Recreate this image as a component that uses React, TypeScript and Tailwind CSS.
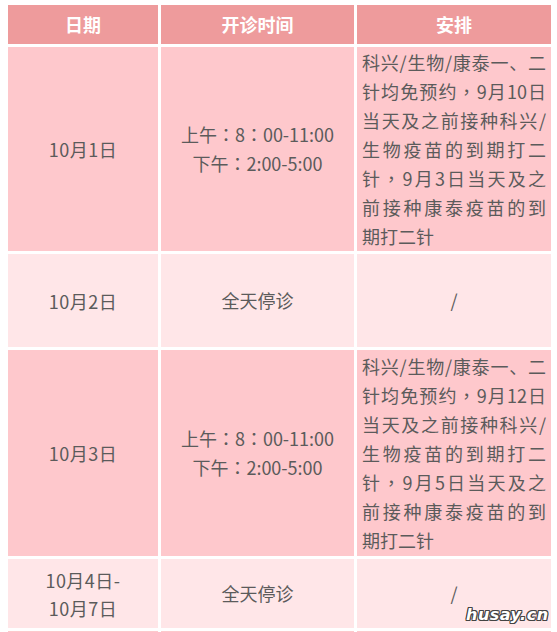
import React from 'react';

const font = "font-['Microsoft_YaHei','Noto_Sans_CJK_SC',sans-serif]";

type Row = {
  date: string[];
  hours: string[];
  plan: string[];
  tone: 'deep' | 'light';
  height: string;
};

const rows: Row[] = [
  {
    date: ['10月1日'],
    hours: ['上午：8：00-11:00', '下午：2:00-5:00'],
    plan: [
      '科兴/生物/康泰一、二',
      '针均免预约，9月10日',
      '当天及之前接种科兴/',
      '生物疫苗的到期打二',
      '针，9月3日当天及之',
      '前接种康泰疫苗的到',
      '期打二针',
    ],
    tone: 'deep',
    height: 'h-[204px]',
  },
  {
    date: ['10月2日'],
    hours: ['全天停诊'],
    plan: ['/'],
    tone: 'light',
    height: 'h-[93px]',
  },
  {
    date: ['10月3日'],
    hours: ['上午：8：00-11:00', '下午：2:00-5:00'],
    plan: [
      '科兴/生物/康泰一、二',
      '针均免预约，9月12日',
      '当天及之前接种科兴/',
      '生物疫苗的到期打二',
      '针，9月5日当天及之',
      '前接种康泰疫苗的到',
      '期打二针',
    ],
    tone: 'deep',
    height: 'h-[206px]',
  },
  {
    date: ['10月4日-', '10月7日'],
    hours: ['全天停诊'],
    plan: ['/'],
    tone: 'light',
    height: 'h-[69px]',
  },
];

// full-width colon and comma sit centred in the reference
const Punct = ({ text }: { text: string }) => (
  <>
    {text.split(/([：，])/).map((part, i) =>
      part === '：' || part === '，' ? (
        <span key={i} className="font-['Noto_Sans_CJK_TC',sans-serif]">
          {part}
        </span>
      ) : (
        <React.Fragment key={i}>{part}</React.Fragment>
      )
    )}
  </>
);

const App = () => {
  return (
    <div className={`w-[557px] h-[632px] overflow-hidden bg-white relative ${font}`}>
      <div className="pl-[8px] pt-[5px] grid grid-cols-[150px_193px_194px] gap-[3px] text-[18px] text-[#5b5b5b]">
        {/* Header */}
        {['日期', '开诊时间', '安排'].map((h) => (
          <div
            key={h}
            className="h-[39px] bg-[#ee9b9c] flex items-center justify-center text-white font-bold"
          >
            {h}
          </div>
        ))}

        {rows.map((row, i) => {
          const bg = row.tone === 'deep' ? 'bg-[#fec8cc]' : 'bg-[#ffe6e8]';
          return (
            <React.Fragment key={i}>
              <div className={`${bg} ${row.height} flex flex-col items-center justify-center leading-[28px] tracking-[0.5px]`}>
                {row.date.map((d) => (
                  <span key={d}>{d}</span>
                ))}
              </div>
              <div className={`${bg} ${row.height} flex flex-col items-center justify-center leading-[29px]`}>
                {row.hours.map((h) => (
                  <span key={h}>
                    <Punct text={h} />
                  </span>
                ))}
              </div>
              <div
                className={`${bg} ${row.height} flex flex-col justify-center px-[5px] leading-[29px] ${
                  row.plan.length === 1 ? 'items-center' : ''
                }`}
              >
                {row.plan.map((p, j) => (
                  <div
                    key={j}
                    className={
                      j < row.plan.length - 1 ? 'text-justify [text-align-last:justify]' : ''
                    }
                  >
                    <Punct text={p} />
                  </div>
                ))}
              </div>
            </React.Fragment>
          );
        })}

        {/* next row, cut off at the bottom */}
        <div className="h-[20px] bg-[#fec8cc]" />
        <div className="h-[20px] bg-[#fec8cc]" />
        <div className="h-[20px] bg-[#fec8cc]" />
      </div>

      {/* watermark */}
      <span className="absolute left-[466px] top-[603px] text-[16px] font-bold italic text-white tracking-[0.5px] font-['DejaVu_Sans',sans-serif] [text-shadow:1px_0_0_#444,-1px_0_0_#444,0_1px_0_#444,0_-1px_0_#444,1px_1px_0_#444,-1px_-1px_0_#444,1px_-1px_0_#444,-1px_1px_0_#444]">
        husay.cn
      </span>
    </div>
  );
};

export default App;
